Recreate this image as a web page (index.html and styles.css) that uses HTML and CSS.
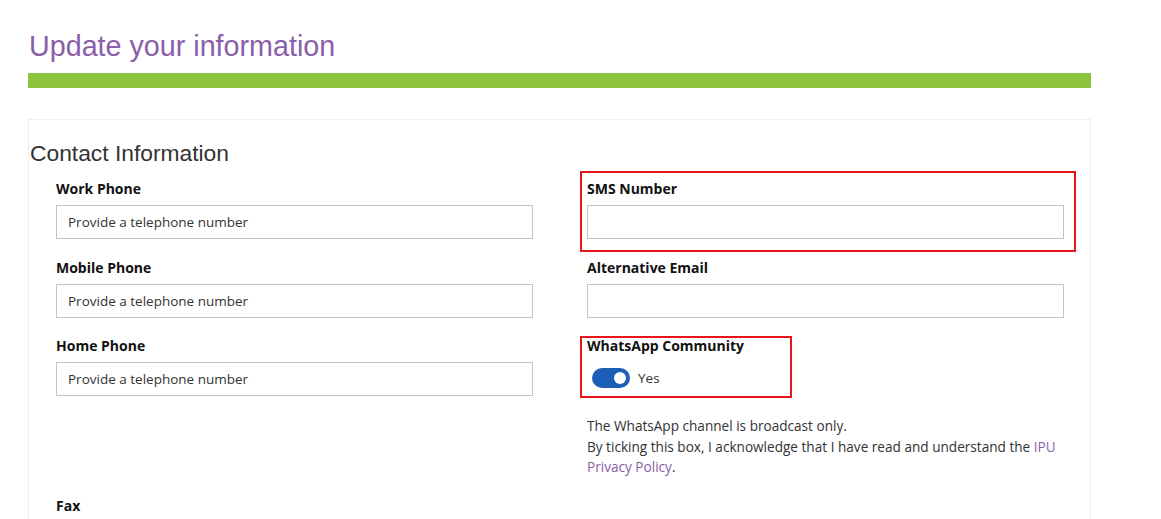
FILE: index.html
```html
<!DOCTYPE html>
<html lang="en">
<head>
    <meta charset="UTF-8">
    <title>Update your information</title>
    <link rel="stylesheet" href="styles.css">
</head>
<body>
    <div class="page">
        <!-- Page title -->
        <h1 class="page-title">Update your information</h1>
        <div class="title-bar"></div>

        <!-- Contact details -->
        <section class="card">
            <h2 class="card-title">Contact Information</h2>
            <div class="fields">
                <div class="field">
                    <label class="field-label" for="work-phone">Work Phone</label>
                    <input class="field-input" id="work-phone" type="tel" placeholder="Provide a telephone number">
                </div>
                <div class="field marked">
                    <label class="field-label" for="sms-number">SMS Number</label>
                    <input class="field-input" id="sms-number" type="tel">
                </div>

                <div class="field">
                    <label class="field-label" for="mobile-phone">Mobile Phone</label>
                    <input class="field-input" id="mobile-phone" type="tel" placeholder="Provide a telephone number">
                </div>
                <div class="field">
                    <label class="field-label" for="alt-email">Alternative Email</label>
                    <input class="field-input" id="alt-email" type="email">
                </div>

                <div class="field">
                    <label class="field-label" for="home-phone">Home Phone</label>
                    <input class="field-input" id="home-phone" type="tel" placeholder="Provide a telephone number">
                </div>
                <div class="field">
                    <div class="whatsapp marked">
                        <span class="field-label">WhatsApp Community</span>
                        <label class="switch-row">
                            <input class="switch" type="checkbox" checked>
                            <span>Yes</span>
                        </label>
                    </div>
                    <p class="note">
                        The WhatsApp channel is broadcast only.<br>
                        By ticking this box, I acknowledge that I have read and understand the <a href="#">IPU Privacy Policy</a>.
                    </p>
                </div>

                <div class="field">
                    <label class="field-label" for="fax">Fax</label>
                    <input class="field-input" id="fax" type="tel" placeholder="Provide a telephone number">
                </div>
            </div>
        </section>
    </div>
</body>
</html>
```

FILE: styles.css
```css
/* Profile update form */
body {
    margin: 0;
    padding: 0;
    background-color: #fff;
    color: #333;
    font-family: "Open Sans", "Noto Sans", sans-serif;
}

.page {
    width: 1063px;
    padding: 30px 0 0 28px;
}

.page-title {
    margin: 0 0 10px 1px;
    font-family: "Liberation Sans", Arial, sans-serif;
    font-size: 28.7px;
    font-weight: normal;
    line-height: 33px;
    color: #8a5ea8;
}

.title-bar {
    height: 15px;
    background-color: #8cc43f;
}

.card {
    box-sizing: border-box;
    margin-top: 31px;
    padding: 19px 0 40px 1px;
    border: 1px solid #efefef;
}

.card-title {
    margin: 0 0 12px;
    font-family: "Liberation Sans", Arial, sans-serif;
    font-size: 22.8px;
    font-weight: normal;
    line-height: 28px;
    color: #333;
}

.fields {
    display: grid;
    grid-template-columns: 1fr 1fr;
    column-gap: 54px;
    row-gap: 18.5px;
    padding: 0 26px;
}

.field {
    position: relative;
}

.field-label {
    display: block;
    margin-bottom: 6px;
    font-size: 14px;
    font-weight: 700;
    line-height: 20px;
    color: #111;
}

.field-input {
    box-sizing: border-box;
    display: block;
    width: 100%;
    height: 34px;
    padding: 0 11px;
    border: 1px solid #c4c4c4;
    border-radius: 0;
    font-family: inherit;
    font-size: 13.5px;
    color: #333;
    background: #fff;
}

.field-input::placeholder {
    color: #333;
    opacity: 1;
}

/* red review outline drawn over a field */
.marked {
    position: relative;
}

.marked::after {
    content: "";
    position: absolute;
    top: -8px;
    left: -7px;
    right: -12px;
    bottom: -13px;
    border: 2px solid #e8141c;
    pointer-events: none;
}

.whatsapp {
    width: 205px;
}

.whatsapp::after {
    top: 0;
    left: -7px;
    right: 0;
    bottom: -10px;
}

.switch-row {
    display: flex;
    align-items: center;
    gap: 8px;
    margin-left: 5px;
    padding-top: 6px;
    font-size: 13.5px;
    color: #333;
}

.switch {
    appearance: none;
    -webkit-appearance: none;
    position: relative;
    width: 38px;
    height: 20px;
    margin: 0;
    border-radius: 10px;
    background-color: #1c5eb8;
    cursor: pointer;
}

.switch::after {
    content: "";
    position: absolute;
    top: 4px;
    right: 4px;
    width: 12px;
    height: 12px;
    border-radius: 50%;
    background-color: #fff;
}

.note {
    margin: 28px 0 0;
    font-size: 13.6px;
    line-height: 20.5px;
    color: #333;
}

.note a {
    color: #8a5ea8;
    text-decoration: none;
}
```
